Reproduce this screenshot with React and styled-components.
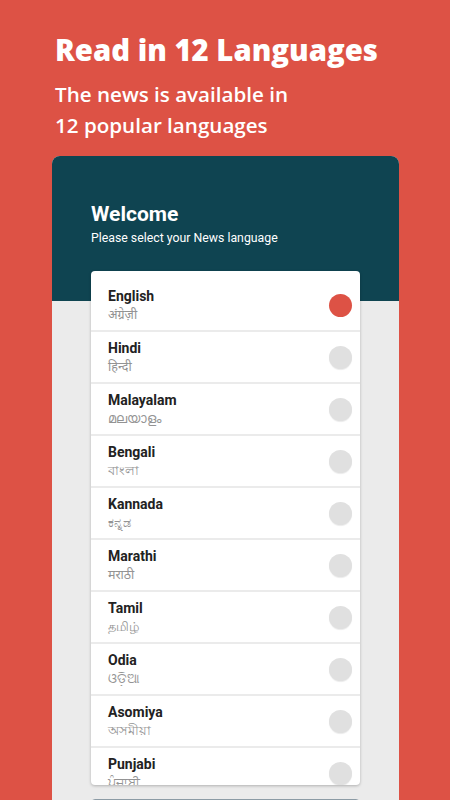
import React, { useState } from 'react';
import styled, { createGlobalStyle } from 'styled-components';

const GlobalStyle = createGlobalStyle`
  html, body {
    margin: 0;
    padding: 0;
    height: 100%;
    overflow: hidden;
    background: #dd5245;
  }
`;

const Page = styled.div`
  width: 450px;
  height: 800px;
  overflow: hidden;
  background: #dd5245;
  font-family: 'Open Sans', 'Noto Sans', sans-serif;
`;

const Intro = styled.header`
  padding: 31px 0 0 55px;
  color: #fff;
  height: 126px;
  box-sizing: border-box;
`;

const Title = styled.h1`
  margin: 0;
  font-size: 29.3px;
  line-height: 38px;
  font-weight: 800;
`;

const Subtitle = styled.p`
  margin: 10px 0 0;
  font-size: 20.6px;
  line-height: 31px;
  font-weight: 600;
`;

const Phone = styled.section`
  margin: 30px 0 0 52px;
  width: 347px;
  height: 700px;
  border-radius: 8px 8px 0 0;
  background: #ebebeb;
  overflow: hidden;
  font-family: Roboto, 'Noto Sans', sans-serif;
`;

const Welcome = styled.div`
  background: #0f4451;
  height: 145px;
  box-sizing: border-box;
  padding: 45px 0 0 39px;
  color: #fff;
`;

const WelcomeTitle = styled.h2`
  margin: 0;
  font-size: 21px;
  line-height: 26px;
  font-weight: 700;
`;

const WelcomeText = styled.p`
  margin: 3px 0 0;
  font-size: 12.3px;
  line-height: 16px;
`;

const Card = styled.div`
  margin: -30px 0 0 39px;
  width: 269px;
  height: 514px;
  padding-top: 9px;
  box-sizing: border-box;
  background: #fff;
  border-radius: 4px;
  overflow: hidden;
  box-shadow: 0 1px 3px rgba(0, 0, 0, 0.25);
`;

const Row = styled.div`
  display: flex;
  align-items: center;
  justify-content: space-between;
  height: 52px;
  box-sizing: border-box;
  padding: 0 8px 0 17px;
  border-bottom: 2px solid #ebebeb;
  cursor: pointer;
`;

const Names = styled.div`
  display: flex;
  flex-direction: column;
`;

const Name = styled.span`
  font-size: 14px;
  line-height: 18px;
  font-weight: 700;
  color: #222;
`;

const Native = styled.span`
  margin-top: 1px;
  font-size: 12.5px;
  line-height: 17px;
  color: #939393;
  font-family: 'Noto Sans', sans-serif;
`;

const Radio = styled.span`
  width: 23px;
  height: 23px;
  border-radius: 50%;
  background: ${(p) => (p.$active ? '#dd5245' : '#e0e0e0')};
  box-shadow: ${(p) => (p.$active ? 'none' : '0 1px 1px rgba(0,0,0,0.08)')};
`;

const NextButton = styled.button`
  display: block;
  margin: 14px 0 0 39px;
  width: 269px;
  height: 44px;
  border: 1px solid #8c9ba5;
  border-radius: 4px;
  background: #e4e8ea;
`;

const languages = [
  { name: 'English', native: 'अंग्रेज़ी' },
  { name: 'Hindi', native: 'हिन्दी' },
  { name: 'Malayalam', native: 'മലയാളം' },
  { name: 'Bengali', native: 'বাংলা' },
  { name: 'Kannada', native: 'ಕನ್ನಡ' },
  { name: 'Marathi', native: 'मराठी' },
  { name: 'Tamil', native: 'தமிழ்' },
  { name: 'Odia', native: 'ଓଡ଼ିଆ' },
  { name: 'Asomiya', native: 'অসমীয়া' },
  { name: 'Punjabi', native: 'ਪੰਜਾਬੀ' },
  { name: 'Gujarati', native: 'ગુજરાતી' },
  { name: 'Telugu', native: 'తెలుగు' },
];

const App = () => {
  const [selected, setSelected] = useState('English');

  return (
    <Page>
      <GlobalStyle />
      <Intro>
        <Title>Read in 12 Languages</Title>
        <Subtitle>
          The news is available in
          <br />
          12 popular languages
        </Subtitle>
      </Intro>
      <Phone>
        <Welcome>
          <WelcomeTitle>Welcome</WelcomeTitle>
          <WelcomeText>Please select your News language</WelcomeText>
        </Welcome>
        <Card>
          {languages.map((lang) => (
            <Row key={lang.name} onClick={() => setSelected(lang.name)}>
              <Names>
                <Name>{lang.name}</Name>
                <Native>{lang.native}</Native>
              </Names>
              <Radio $active={selected === lang.name} />
            </Row>
          ))}
        </Card>
        <NextButton aria-label="Continue" />
      </Phone>
    </Page>
  );
};

export default App;
